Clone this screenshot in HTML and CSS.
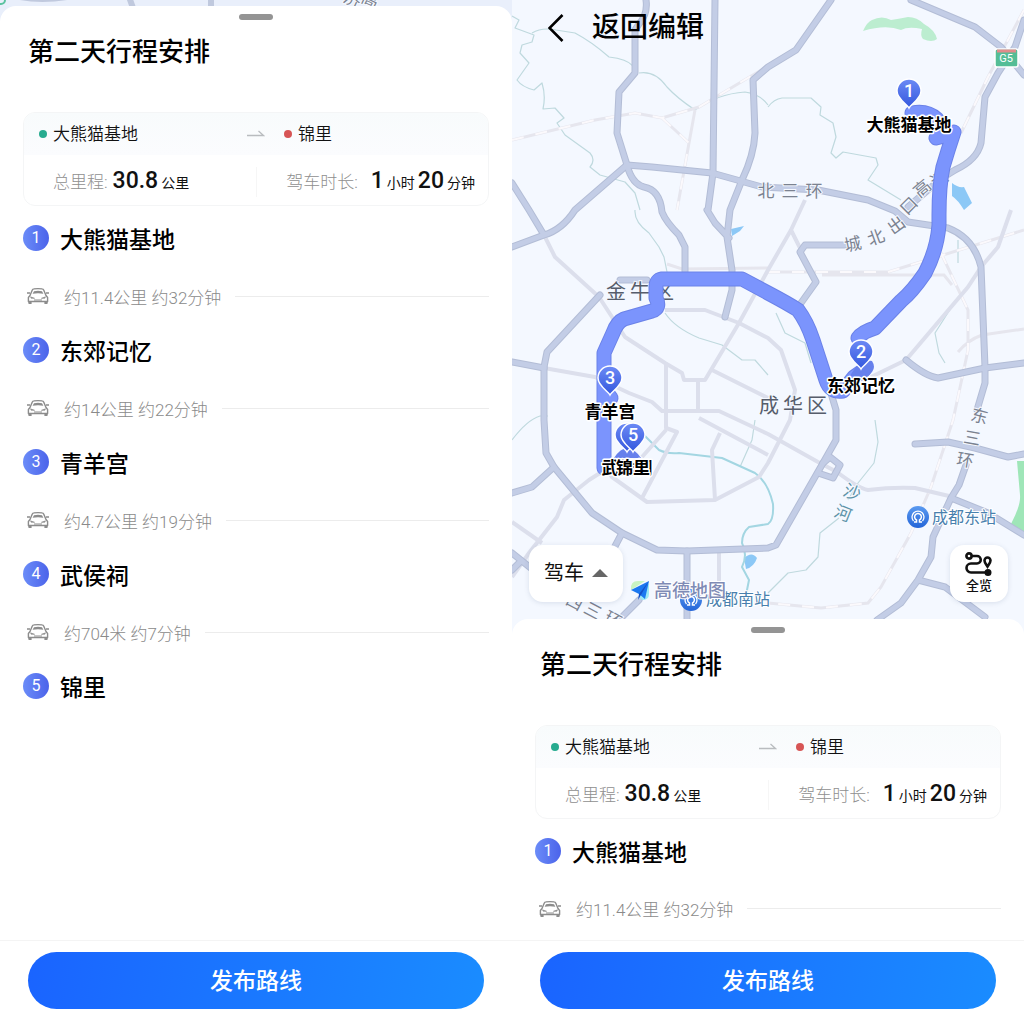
FILE: index.html
```
<!DOCTYPE html>
<html lang="zh-CN">

<head>
    <meta charset="UTF-8" />
    <meta name="viewport" content="width=device-width, initial-scale=1.0" />
    <title>第二天行程安排</title>
    <link rel="stylesheet" href="styles.css">
</head>

<body>
    <!-- shared icons -->
    <svg class="defs" width="0" height="0" aria-hidden="true">
        <defs>
            <linearGradient id="pin-fill" x1="0" y1="0" x2="0" y2="1">
                <stop offset="0" stop-color="#6c8af5" />
                <stop offset="1" stop-color="#3357dd" />
            </linearGradient>
            <linearGradient id="station-fill" x1="0" y1="0" x2="0" y2="1">
                <stop offset="0" stop-color="#5a9af0" />
                <stop offset="1" stop-color="#2465d8" />
            </linearGradient>
            <g id="roads">
                <path d="M134 0Q136 14 127 24L123 30V73L107 92 105 133 115 165 Q120 184 132 187Q148 190 150 212Q154 222 167 235L173 247V280" />
                <path d="M203 0 201 173 196 210M195 210 203 223 217 238M319 0 284 50 256 67 241 80 243 133Q242 155 230 180L218 210 215 237 220 270V290L213 317" />
                <path d="M63 210 115 165 140 167 200 173 250 187 306 190 356 200 383 211 396 222 436 228Q462 238 469 267L473 367V383L465 410M63 210Q50 230 32 235L0 247M0 183 17 210 32 235" />
                <path d="M135 280H108M88 295 35 352 32 367V420L34 453 42 467 80 513 110 533 145 550 175 551 256 548 264 545 311 463 324 440V410L318 390" />
                <path d="M0 362 32 368M0 493 20 487 42 467M110 533 100 552M0 553 30 577M0 570 8 562M175 551V635M127 600 95 632" />
                <path d="M399 0 463 27 489 47 512 75M512 20 503 47 486 73 473 97 469 143Q465 160 443 170L430 178 396 207M333 245H293L288 252 304 282 289 303" />
                <path d="M512 363 473 368 426 378Q413 376 394 360M403 444 436 442 463 448 496 457 512 454" />
                <path d="M454 465 447 485 439 498 421 537 419 557 406 580 389 603 365 620M439 498 476 513 512 535M406 580 433 587 473 617M311 463 318 457 328 465 321 478 306 473" />
            </g>
            <g id="route">
                <path d="M400 113Q415 110 425 119L430 130M424 138Q436 135 442 132 436 150 431 167 427 185 427 215V225Q425 250 413 273 400 292 389 301L363 328Q350 332 346 338" />
                <path d="M352 370 342 377 331 391Q318 393 314 380L301 340Q295 322 286 310 275 303 256 293L230 279H150Q144 280 144 287V298Q149 308 140 311L112 319Q105 322 101 333L92 353V468" />
                <path d="M93 390 99 398" />
            </g>
        </defs>
        <symbol id="car" viewBox="0 0 24 18">
            <path d="M1 6h3M20 6h3" stroke="currentColor" stroke-width="1.6" fill="none" />
            <path d="M4 8.5 6.2 3.2Q6.7 2 8 1.9Q12 1.3 16 1.9Q17.300 2 17.800 3.200L20 8.500L21.600 10.500V14.500H2.400V10.500Z" stroke="currentColor" stroke-width="1.400" fill="none" stroke-linejoin="round" />
            <path d="M6.600 6.800 8 4.200Q12 3.500 16 4.200L17.400 6.800Q12 5.900 6.600 6.800Z" fill="currentColor" />
            <path d="M4.500 9.800 8.600 11.300H5.200ZM19.500 9.800 15.400 11.300H18.800Z" fill="currentColor" stroke="currentColor" stroke-width=".6" />
            <path d="M8 13h8" stroke="currentColor" stroke-width="1" />
            <path d="M2 14h3.600v3H2.600ZM22 14h-3.600v3h3Z" fill="currentColor" />
        </symbol>
        <symbol id="arrow" viewBox="0 0 18 8">
            <path d="M0 5.500H16.500L11.500 1" stroke="#b9bcbf" stroke-width="1.300" fill="none" />
        </symbol>
        <symbol id="pin" viewBox="0 0 28 34">
            <path d="M14 31C12 27 2 22 2 14A12 12 0 0 1 26 14C26 22 16 27 14 31Z" fill="url(#pin-fill)" stroke="#fff" stroke-width="1.500" />
        </symbol>
        <symbol id="metro" viewBox="0 0 22 22">
            <circle cx="11" cy="11" r="11" fill="url(#station-fill)" />
            <path d="M6.500 15A6 6 0 1 1 15.500 15" stroke="#fff" stroke-width="1.300" fill="none" />
            <path d="M7 16H9.500V14A3.400 3.400 0 1 1 12.500 14V16H15" stroke="#fff" stroke-width="1.500" fill="none" />
        </symbol>
    </svg>

    <div class="screens">

        <section class="phone">
            <div class="map map-peek">
                <svg class="map-canvas" viewBox="0 0 512 22" preserveAspectRatio="xMidYMin slice" aria-hidden="true">
                    <path class="road" d="M8 -6Q40 4 82 -6M128 -6 138 22M211 -6V22" />
                    <circle cx="1" cy="0" r="4" fill="none" stroke="#5cc3a0" stroke-width="2" />
                    <text class="road-name" transform="translate(350 5) rotate(25)">济</text>
                    <text class="road-name" transform="translate(368 5) rotate(25)">高</text>
                </svg>
            </div>

            <main class="sheet">
                <span class="handle"></span>
                <h1 class="title">第二天行程安排</h1>

                <div class="summary">
                    <div class="summary-route">
                        <span class="place start">大熊猫基地</span>
                        <svg class="arrow"><use href="#arrow" /></svg>
                        <span class="place end">锦里</span>
                    </div>
                    <div class="summary-total">
                        <p class="total"><span class="label">总里程:</span> <b>30.8</b><small>公里</small></p>
                        <p class="total total-time"><span class="label">驾车时长:</span> <b>1</b><small>小时</small><b>20</b><small>分钟</small></p>
                    </div>
                </div>

                <ol class="stops">
                    <li>
                        <h2 class="stop"><span class="badge">1</span>大熊猫基地</h2>
                        <p class="leg"><svg class="car"><use href="#car" /></svg>约11.4公里 约32分钟</p>
                    </li>
                    <li>
                        <h2 class="stop"><span class="badge">2</span>东郊记忆</h2>
                        <p class="leg"><svg class="car"><use href="#car" /></svg>约14公里 约22分钟</p>
                    </li>
                    <li>
                        <h2 class="stop"><span class="badge">3</span>青羊宫</h2>
                        <p class="leg"><svg class="car"><use href="#car" /></svg>约4.7公里 约19分钟</p>
                    </li>
                    <li>
                        <h2 class="stop"><span class="badge">4</span>武侯祠</h2>
                        <p class="leg"><svg class="car"><use href="#car" /></svg>约704米 约7分钟</p>
                    </li>
                    <li>
                        <h2 class="stop"><span class="badge">5</span>锦里</h2>
                    </li>
                </ol>
            </main>

            <footer class="footer">
                <button class="publish">发布路线</button>
            </footer>
        </section>

        <section class="phone">
            <div class="map">
                <svg class="map-canvas" viewBox="0 0 512 635" preserveAspectRatio="xMidYMin slice">
                    <!-- parks and water -->
                    <path class="park" d="M351 31Q355 22 360 20Q370 15 379 20Q386 19 396 17Q405 17 412 24Q423 30 425 39Q420 43 411 39Q408 36 410 29Q396 26 389 30Q374 24 351 31Z" />
                    <path class="park park-deep" d="M505 461H512V532L499 524Q509 505 508 495Z" />
                    <path class="lake" d="M440 183Q446 188 452 187L457 197L460 203L452 210Q446 200 440 196ZM219 229 232 226 228 231 220 236ZM232 558Q240 551 245 558Q242 567 234 569Z" />
                    <path class="river" d="M0 16 7 20 3 28 22 35 20 42 10 45 8 53 17 63 5 80Q10 87 22 90L30 83Q34 96 31 109L43 108 52 118 45 123 53 135 78 153Q84 160 78 167L88 175 113 182 123 193 128 210M20 33Q30 27 44 30L63 33Q80 42 97 57Q115 59 121 66M127 73Q143 70 155 87Q165 98 183 110M183 110Q205 94 233 92Q248 94 256 105M256 107Q262 99 270 98H299L309 107 308 115 321 123 324 137 319 153 324 158 331 152 364 158 366 165 356 180 389 200" />
                    <path class="river" d="M123 210Q122 222 137 233L147 247 152 257 155 272M153 313Q163 328 187 338L210 345 230 360H243L256 375M446 240V263M446 297 423 333 427 353 433 363M264 313 273 333 293 343 299 363M243 420 240 440 228 467M363 420 366 442 362 463 346 483 336 500M327 518 308 533 306 557 294 570 276 573 256 593M0 440Q15 420 28 416H36" />
                    <path class="river river-wide" d="M123 426 147 450Q155 454 167 453L210 458 243 473Q256 482 261 504Q262 520 256 524L237 527Q230 533 230 543 236 555 230 567L237 580 233 600" />

                    <!-- railways -->
                    <path class="rail" d="M0 140 83 120 123 113 150 118 187 107 256 66M150 118 177 143 165 210M183 110 177 143M512 10 476 77 449 133M256 272H376L512 230M310 275H432L440 285M429 253 456 310V350L446 397 441 420 419 487 399 533 369 587 356 603 309 608 256 603M155 264 170 269 256 268M446 352Q456 340 470 335L512 329" />
                    <path class="rail rail-dash" d="M0 140 83 120 123 113 150 118 187 107 256 66M150 118 177 143 165 210M512 10 476 77 449 133M256 272H376L512 230M429 253 456 310V350L446 397 441 420 419 487 399 533 369 587 356 603 309 608 256 603" />

                    <!-- small streets -->
                    <g class="street">
                        <path d="M32 235 43 257 87 297 113 337 153 363 170 373 172 380H193L227 323 256 270 279 230 293 200" />
                        <path d="M153 310H193L227 323 256 338 269 350 283 390 278 420 256 463 247 477 203 500 135 502 100 477 91 464" />
                        <path d="M32 368 83 377 117 393 140 402 150 411H207L256 434 306 462 325 472Q346 488 356 490 380 487 403 488L437 496" />
                        <path d="M154 363V428L165 432 130 498M154 430 130 457M186 380V411M200 370 256 398" />
                        <path d="M203 500 200 450 208 433M187 418 256 455M88 473 77 480 52 500 45 517 17 553 0 577M207 552V590" />
                        <path d="M359 377 394 360 456 287 469 267 486 247 499 210M279 230 289 250" />
                        <path d="M0 522 30 543" />
                    </g>

                    <!-- main roads: edge first, then the lighter body -->
                    <use href="#roads" class="road-edge" />
                    <use href="#roads" class="road-body" />

                    <rect x="483" y="49" width="23" height="18" rx="2" fill="#54bd96" stroke="#fff" stroke-width="1.500" />
                    <path d="M485 51H504" stroke="#e08b8b" stroke-width="3" />
                    <text class="sign-text" x="494" y="62">G5</text>

                    <!-- place and road names -->
                    <text class="road-name" x="254 278 302" y="197">北三环</text>
                    <text class="road-name" transform="translate(342 250) rotate(-12)">城</text>
                    <text class="road-name" transform="translate(366 243) rotate(-20)">北</text>
                    <text class="road-name" transform="translate(388 230) rotate(-36)">出</text>
                    <text class="road-name" transform="translate(401 210) rotate(-45)">口</text>
                    <text class="road-name" transform="translate(414 193) rotate(-40)">高</text>
                    <text class="road-name" transform="translate(430 184) rotate(-30)">速</text>
                    <text class="road-name" transform="translate(466 422) rotate(15)">东</text>
                    <text class="road-name" transform="translate(459 444) rotate(10)">三</text>
                    <text class="road-name" transform="translate(452 466) rotate(10)">环</text>
                    <text class="road-name" transform="translate(60 607) rotate(28)">西</text>
                    <text class="road-name" transform="translate(78 616) rotate(28)">三</text>
                    <text class="road-name" transform="translate(98 625) rotate(28)">环</text>
                    <text class="road-name river-name" transform="translate(338 498) rotate(22)">沙</text>
                    <text class="road-name river-name" transform="translate(329 519) rotate(22)">河</text>
                    <text class="district" x="104 128 152" y="299">金牛区</text>
                    <text class="district" x="257 281 305" y="413">成华区</text>

                    <use href="#metro" x="395" y="506" width="22" height="22" />
                    <text class="station" x="420" y="523">成都东站</text>
                    <use href="#metro" x="168" y="589" width="22" height="22" />
                    <text class="station" x="194" y="605">成都南站</text>

                    <!-- driving route -->
                    <use href="#route" class="route-edge" />
                    <use href="#route" class="route-body" />
                    <path class="route-stop" d="M102 458Q115 438 129 458ZM338 376Q348 358 360 361Q366 370 354 377Z" />

                    <!-- amap logo -->
                    <path d="M119 590Q118 581 126 581H133L119 590Z" fill="#c9f3c2" />
                    <path d="M137 583V594Q137 600 130 600L127 597Z" fill="#9de9f5" />
                    <path d="M119 590 137 581 133 599 127 594Z" fill="#1b78f0" />
                    <path d="M127 594 137 581 126 600Z" fill="#1450c8" />
                    <text class="brand" x="142" y="597">高德地图</text>

                    <!-- stop pins -->
                    <use href="#pin" x="383" y="77" width="28" height="34" />
                    <text class="pin-no" x="397" y="97">1</text>
                    <use href="#pin" x="335" y="338" width="28" height="34" />
                    <text class="pin-no" x="349" y="358">2</text>
                    <use href="#pin" x="84" y="364" width="28" height="34" />
                    <text class="pin-no" x="98" y="384">3</text>
                    <use href="#pin" x="101" y="421" width="28" height="34" />
                    <use href="#pin" x="107" y="421" width="28" height="34" />
                    <text class="pin-no" x="121" y="441">5</text>
                    <text class="pin-name" x="397" y="131">大熊猫基地</text>
                    <text class="pin-name" x="349" y="392">东郊记忆</text>
                    <text class="pin-name" x="98" y="418">青羊宫</text>
                    <text class="pin-name" x="115" y="474">武侯祠</text>
                    <text class="pin-name" x="121" y="474">锦里</text>
                </svg>

                <header class="map-header">
                    <button class="back">
                        <svg class="back-icon" viewBox="0 0 16 28" aria-hidden="true"><path d="M14.500 1 1.500 14 14.500 27" /></svg>
                        返回编辑
                    </button>
                </header>

                <div class="map-tools">
                    <label class="mode">
                        <select class="mode-select" aria-label="出行方式">
                            <option>驾车</option>
                        </select>
                    </label>
                    <button class="overview">
                        <svg class="overview-icon" viewBox="0 0 28 24" aria-hidden="true">
                            <circle cx="4" cy="4" r="2.600" />
                            <path d="M7 4H12A3.500 3.500 0 0 1 12 11.500H6A4.500 4.500 0 0 0 6 20.500H22" />
                            <circle cx="23" cy="20.500" r="2.200" fill="#111" />
                            <path d="M22.500 14.500C21 12 19.500 10.500 19.500 8.500A3 3 0 0 1 25.500 8.500C25.500 10.500 24 12 22.500 14.500Z" />
                        </svg>
                        全览
                    </button>
                </div>
            </div>

            <main class="sheet">
                <span class="handle"></span>
                <h1 class="title">第二天行程安排</h1>

                <div class="summary">
                    <div class="summary-route">
                        <span class="place start">大熊猫基地</span>
                        <svg class="arrow"><use href="#arrow" /></svg>
                        <span class="place end">锦里</span>
                    </div>
                    <div class="summary-total">
                        <p class="total"><span class="label">总里程:</span> <b>30.8</b><small>公里</small></p>
                        <p class="total total-time"><span class="label">驾车时长:</span> <b>1</b><small>小时</small><b>20</b><small>分钟</small></p>
                    </div>
                </div>

                <ol class="stops">
                    <li>
                        <h2 class="stop"><span class="badge">1</span>大熊猫基地</h2>
                        <p class="leg"><svg class="car"><use href="#car" /></svg>约11.4公里 约32分钟</p>
                    </li>
                </ol>
            </main>

            <footer class="footer">
                <button class="publish">发布路线</button>
            </footer>
        </section>

    </div>
</body>

</html>
```
FILE: styles.css
```
* {
    box-sizing: border-box;
}

body {
    margin: 0;
    background: white;
    color: #111;
    font-family: Roboto, "Noto Sans CJK SC", sans-serif;
}

h1, h2, p, ol {
    margin: 0;
    padding: 0;
}

button, select {
    border: none;
    font-family: inherit;
    color: inherit;
    cursor: pointer;
}

.defs {
    position: absolute;
}

.screens {
    display: grid;
    grid-template-columns: 1fr 1fr;
    height: 100vh;
}

.phone {
    display: flex;
    flex-direction: column;
    height: 100vh;
    min-width: 0;
}

/* map */

.map {
    position: relative;
    flex: 0 0 62%;
    background: #f4f8ff;
    overflow: hidden;
}

.map-peek {
    flex-basis: 22px;
    background: #e9effb;
}

.map-canvas {
    display: block;
    width: 100%;
    height: 100%;
}

.park {
    fill: #bcedd0;
}

.park-deep {
    fill: #9fe6b8;
}

.lake {
    fill: #8cc8f6;
}

.river {
    fill: none;
    stroke: #bfd9de;
    stroke-width: 1.2;
    stroke-linejoin: round;
}

.river-wide {
    stroke: #a3d6e2;
    stroke-width: 2;
}

.rail {
    fill: none;
    stroke: #e6e6ee;
    stroke-width: 3;
}

.rail-dash {
    stroke: #fbf9fc;
    stroke-width: 2;
    stroke-dasharray: 12 12;
}

.street {
    fill: none;
    stroke: #dcdfec;
    stroke-width: 4;
    stroke-linejoin: round;
}

.road {
    fill: none;
    stroke: #c0c9de;
    stroke-width: 6;
}

.road-edge, .road-body, .route-edge, .route-body {
    fill: none;
    stroke-linejoin: round;
    stroke-linecap: round;
}

.road-edge {
    stroke: #b3bdd6;
    stroke-width: 7;
}

.road-body {
    stroke: #c3cde6;
    stroke-width: 5;
}

.route-edge {
    stroke: #6b82e8;
    stroke-width: 15;
}

.route-body {
    stroke: #7b94fd;
    stroke-width: 13;
}

.route-stop {
    fill: #6680ec;
}

.map text {
    text-anchor: middle;
}

.road-name {
    font-size: 17px;
    fill: #7b8290;
    stroke: #f4f8ff;
    stroke-width: 2px;
    paint-order: stroke;
}

.river-name {
    fill: #5c93a8;
}

.district {
    font-size: 20px;
    fill: #565d6b;
    stroke: #f4f8ff;
    stroke-width: 2px;
    paint-order: stroke;
}

.map .station {
    font-size: 16px;
    fill: #4880ae;
    stroke: white;
    stroke-width: 2px;
    paint-order: stroke;
    text-anchor: start;
}

.map .brand {
    font-size: 18px;
    font-weight: 500;
    fill: #7f8bb5;
    stroke: white;
    stroke-width: 2px;
    paint-order: stroke;
    text-anchor: start;
}

.sign-text {
    font-size: 11px;
    fill: white;
}

.pin-no {
    font-size: 18px;
    font-weight: 500;
    fill: white;
}

.pin-name {
    font-size: 17px;
    font-weight: bold;
    fill: black;
    stroke: white;
    stroke-width: 3px;
    stroke-linejoin: round;
    paint-order: stroke;
}

.map-header {
    position: absolute;
    top: 8px;
    left: 36px;
}

.back {
    display: flex;
    align-items: center;
    gap: 28px;
    padding: 0;
    background: none;
    color: black;
    font-size: 28px;
    font-weight: 500;
    line-height: 40px;
}

.back-icon {
    width: 16px;
    height: 28px;
    fill: none;
    stroke: black;
    stroke-width: 2.6;
}

.map-tools {
    position: absolute;
    right: 16px;
    bottom: 33px;
    left: 17px;
    display: flex;
    justify-content: space-between;
}

.mode, .overview {
    height: 57px;
    background: white;
    border-radius: 14px;
    box-shadow: 0 1px 5px rgba(60, 80, 120, 0.15);
}

.mode {
    position: relative;
    width: 94px;
}

.mode::after {
    content: "";
    position: absolute;
    top: 24px;
    right: 15px;
    border: 8px solid transparent;
    border-top: none;
    border-bottom-color: #666;
    pointer-events: none;
}

.mode-select {
    appearance: none;
    width: 100%;
    height: 100%;
    padding: 0 15px;
    background: none;
    font-size: 20px;
}

.overview {
    display: flex;
    flex-direction: column;
    align-items: center;
    width: 58px;
    padding: 7px 0 0;
    font-size: 13px;
    font-weight: 500;
    line-height: 20px;
}

.overview-icon {
    width: 28px;
    height: 24px;
    fill: none;
    stroke: #111;
    stroke-width: 2.6;
}

/* trip sheet */

.sheet {
    position: relative;
    flex: 1;
    min-height: 0;
    margin-top: -16px;
    padding: 8px 23px 0;
    background: white;
    border-radius: 16px 16px 0 0;
    overflow: hidden;
}

.handle {
    display: block;
    width: 34px;
    height: 6px;
    margin: 0 auto;
    background: #949494;
    border-radius: 3px;
}

.title {
    margin: 12px 5px 40px;
    color: black;
    font-size: 26px;
    font-weight: 500;
    line-height: 40px;
}

.summary {
    height: 94px;
    border: 1px solid #f4f5f6;
    border-radius: 12px;
    overflow: hidden;
}

.summary-route {
    display: grid;
    grid-template-columns: 223px 37px 1fr;
    align-items: center;
    height: 42px;
    background: linear-gradient(#f8fbfc, #fbfcfe);
    font-size: 17px;
    font-weight: 350;
    line-height: 24px;
}

.place {
    display: flex;
    align-items: center;
    gap: 6px;
}

.place::before {
    content: "";
    width: 8px;
    height: 8px;
    background: #27ab8f;
    border-radius: 50%;
}

.start {
    padding-left: 15px;
}

.end::before {
    background: #d75555;
}

.arrow {
    width: 18px;
    height: 8px;
}

.summary-total {
    display: grid;
    grid-template-columns: 203px 1fr;
    align-items: center;
    height: 52px;
    padding: 2px 13px 0 29px;
}

.total {
    display: flex;
    align-items: baseline;
    gap: 3px;
    font-size: 17px;
    line-height: 28px;
    white-space: nowrap;
}

.total .label {
    margin-right: 2px;
    color: #8f8f8f;
    font-weight: 300;
}

.total b {
    font-size: 23px;
    font-weight: 500;
}

.total small {
    font-size: 14px;
}

.total-time {
    justify-content: flex-end;
    border-left: 1px solid #f6f6f6;
}

.total-time .label {
    margin-right: 10px;
}

.stops {
    list-style: none;
    padding-top: 16px;
}

.stop {
    display: flex;
    align-items: center;
    gap: 11px;
    height: 32px;
    color: black;
    font-size: 23px;
    font-weight: 500;
}

.badge {
    width: 26px;
    height: 26px;
    background: linear-gradient(90deg, #6b8cf8, #4b63ea);
    border-radius: 50%;
    color: white;
    font-size: 16px;
    font-weight: 400;
    line-height: 26px;
    text-align: center;
}

.leg {
    display: flex;
    align-items: center;
    height: 24px;
    margin: 30px 0 26px;
    padding-left: 3px;
    color: #8a8a8a;
    font-size: 17px;
    font-weight: 300;
}

.leg::after {
    content: "";
    flex: 1;
    height: 1px;
    margin-left: 14px;
    background: #ececec;
}

.car {
    width: 24px;
    height: 18px;
    margin-right: 14px;
    color: #8c8c8c;
}

/* bottom bar */

.footer {
    position: relative;
    padding: 11px 28px 15px;
    background: white;
    border-top: 1px solid #f4f4f4;
}

.publish {
    display: block;
    width: 100%;
    height: 57px;
    padding: 0 0 3px;
    background: linear-gradient(100deg, #1a64ff, #1a8cff);
    border-radius: 29px;
    color: white;
    font-size: 23px;
    font-weight: 500;
}
```
